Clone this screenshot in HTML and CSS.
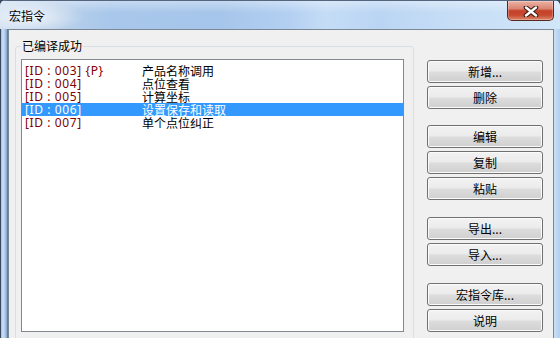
FILE: index.html
```html
<!DOCTYPE html>
<html lang="zh-CN">
<head>
<meta charset="utf-8">
<title>宏指令</title>
<link rel="stylesheet" href="styles.css">
</head>
<body>
<div class="window">
  <div class="titlebar">
    <span class="title">宏指令</span>
    <div class="close">
      <svg width="16" height="11" viewBox="0 0 16 11">
        <path d="M3 1.5 L13 9.5 M13 1.5 L3 9.5" stroke="#3a1d18" stroke-width="4.6" stroke-linecap="round"/>
        <path d="M3 1.5 L13 9.5 M13 1.5 L3 9.5" stroke="#ffffff" stroke-width="2.4" stroke-linecap="round"/>
      </svg>
    </div>
  </div>
  <div class="frame-row">
    <div class="frame-left"></div>
    <div class="client">
      <fieldset class="group">
        <legend>已编译成功</legend>
        <div class="listbox">
          <div class="row"><span class="id">[ID : 003] {P}</span><span class="name">产品名称调用</span></div>
          <div class="row"><span class="id">[ID : 004]</span><span class="name">点位查看</span></div>
          <div class="row"><span class="id">[ID : 005]</span><span class="name">计算坐标</span></div>
          <div class="row selected"><span class="id">[ID : 006]</span><span class="name">设置保存和读取</span></div>
          <div class="row"><span class="id">[ID : 007]</span><span class="name">单个点位纠正</span></div>
        </div>
      </fieldset>
      <div class="buttons">
        <div class="btn-group first">
          <div class="btn">新增...</div>
          <div class="btn">删除</div>
        </div>
        <div class="btn-group">
          <div class="btn">编辑</div>
          <div class="btn">复制</div>
          <div class="btn">粘贴</div>
        </div>
        <div class="btn-group">
          <div class="btn">导出...</div>
          <div class="btn">导入...</div>
        </div>
        <div class="btn-group">
          <div class="btn">宏指令库...</div>
          <div class="btn">说明</div>
        </div>
      </div>
    </div>
    <div class="frame-right"></div>
  </div>
</div>
</body>
</html>
```

FILE: styles.css
```css
html, body {
  margin: 0;
  padding: 0;
}
body {
  width: 560px;
  height: 338px;
  overflow: hidden;
  background: #3b4a63;
  font-family: "Noto Sans CJK SC", "Noto Sans", sans-serif;
  font-size: 12px;
  color: #000;
}
.window {
  width: 560px;
  height: 338px;
  display: flex;
  flex-direction: column;
  border-radius: 6px 6px 0 0;
  overflow: hidden;
  background: #b4cfee;
}
.titlebar {
  height: 29px;
  flex: none;
  display: flex;
  align-items: flex-start;
  border-top: 1px solid #55657d;
  box-sizing: border-box;
  background:
    radial-gradient(ellipse 55px 16px at 30px 16px, rgba(255,255,255,0.75), rgba(255,255,255,0) 100%),
    linear-gradient(180deg, rgba(255,255,255,0.35) 0, rgba(255,255,255,0) 12px),
    linear-gradient(90deg, #cfdff0 0, #b9d0ea 60px, #a8c7eb 110px, #a6c5ea 220px, #b3d0f2 290px, #c4dcf6 325px, #bad5f3 380px, #c6ddf6 450px, #d2e6f9 560px);
}
.title {
  margin: 8px 0 0 9px;
  line-height: 14px;
  font-size: 12px;
}
.close {
  margin-left: auto;
  margin-right: 6px;
  width: 47px;
  height: 20px;
  box-sizing: border-box;
  border: 1px solid #57281f;
  border-top: none;
  border-radius: 0 0 5px 5px;
  background: linear-gradient(180deg, #ebb3a6 0%, #db8571 40%, #c5412a 52%, #c84a31 75%, #da8a6f 100%);
  display: flex;
  align-items: center;
  justify-content: center;
  box-shadow: inset 0 0 0 1px rgba(255,255,255,0.25);
}
.close svg {
  display: block;
  margin-top: 1px;
}
.frame-row {
  flex: 1;
  display: flex;
  min-height: 0;
}
.frame-left {
  width: 8px;
  flex: none;
  background: linear-gradient(90deg, #3c4a60 0, #3c4a60 1px, #9fbfe6 1px, #cfe2f7 3px, #a9c7ec 5px, #8aa6c9 7px, #6f7a88 7px);
}
.frame-right {
  width: 6px;
  flex: none;
  background: linear-gradient(90deg, #c9def6 0, #b2cff0 100%);
}
.client {
  width: 546px;
  flex: none;
  box-sizing: border-box;
  border: 1px solid #7a8797;
  border-bottom: none;
  background: #f0f0f0;
  display: flex;
  align-items: flex-start;
  padding: 9px 0 0 6px;
}
.group {
  width: 399px;
  box-sizing: border-box;
  margin: 0;
  padding: 6px 9px 20px 5px;
  border: 1px solid #d5dfe5;
  border-radius: 3px;
  flex: none;
}
.group legend {
  padding: 0 1px;
  line-height: 14px;
  font-size: 12px;
}
.listbox {
  width: 383px;
  height: 273px;
  box-sizing: border-box;
  border: 1px solid #828790;
  background: #fff;
  padding-top: 4px;
}
.row {
  height: 13px;
  line-height: 13px;
  display: grid;
  grid-template-columns: 117px 1fr;
  padding-left: 3px;
  white-space: nowrap;
}
.row .id {
  color: #800000;
  font-family: "Noto Sans", "Noto Sans CJK SC", sans-serif;
  letter-spacing: 0.6px;
}
.row .name {
  color: #000;
}
.row.selected {
  background: #3399ff;
}
.row.selected .id,
.row.selected .name {
  color: #fff;
}
.buttons {
  margin: 21px 0 0 13px;
  display: flex;
  flex-direction: column;
  gap: 17px;
}
.btn-group {
  display: flex;
  flex-direction: column;
  gap: 3px;
}
.btn-group.first {
  margin-bottom: -1px;
}
.btn {
  width: 116px;
  height: 23px;
  box-sizing: border-box;
  border: 1px solid #707070;
  border-radius: 3px;
  background: linear-gradient(180deg, #f2f2f2 0%, #ebebeb 48%, #dddddd 52%, #cfcfcf 100%);
  box-shadow: inset 0 0 0 1px #fbfbfb;
  display: flex;
  align-items: center;
  justify-content: center;
  font-size: 12px;
  line-height: 14px;
}
```
